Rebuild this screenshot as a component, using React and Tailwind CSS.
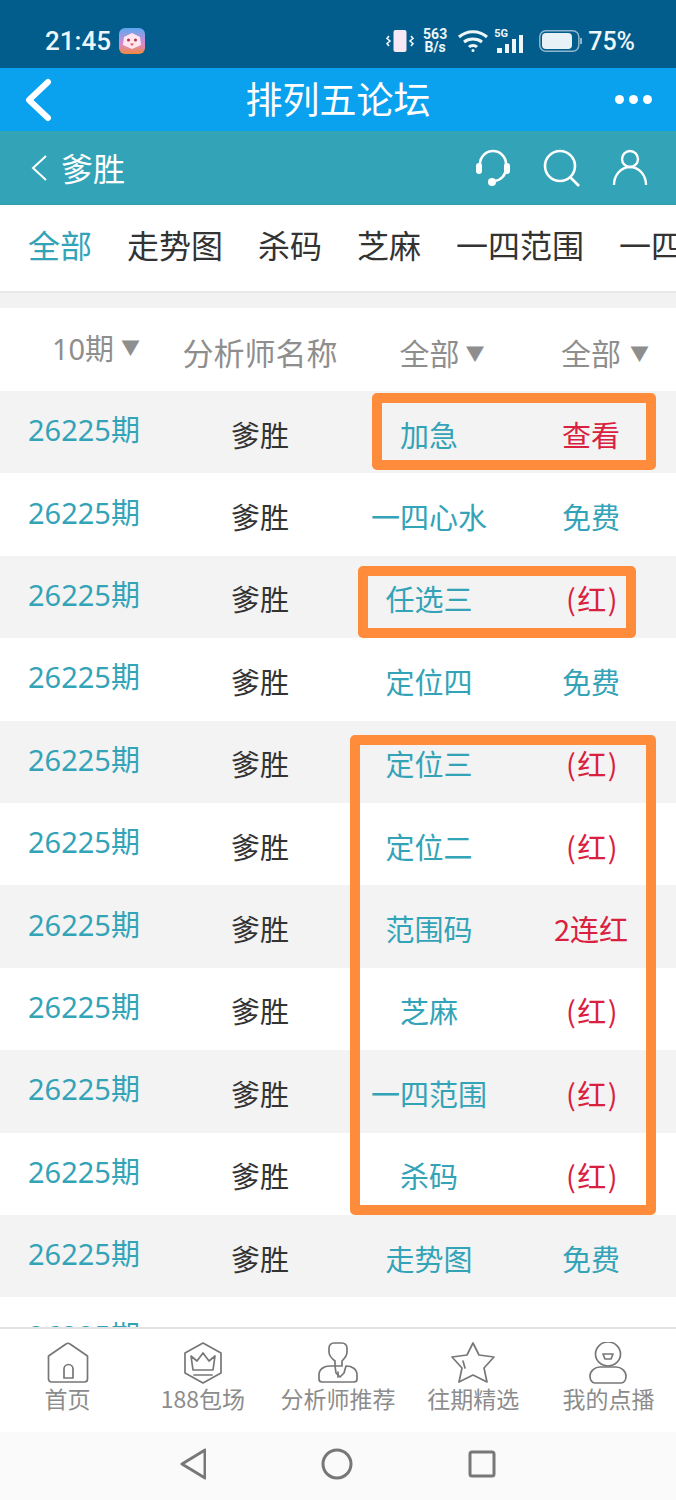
import React from "react";

const FONT = '"Noto Sans CJK SC", "Noto Sans", sans-serif';
const LATIN = '"Noto Sans", "Noto Sans CJK SC", sans-serif';
const ROBOTO = "Roboto, sans-serif";
const rows = [
  ["加急", "查看", 1], ["一四心水", "免费", 0], ["任选三", "(红)", 1], ["定位四", "免费", 0],
  ["定位三", "(红)", 1], ["定位二", "(红)", 1], ["范围码", "2连红", 1], ["芝麻", "(红)", 1],
  ["一四范围", "(红)", 1], ["杀码", "(红)", 1], ["走势图", "免费", 0], ["", "", 0],
];
const COLS = "grid grid-cols-[168px_184px_154px_170px] items-center";

function Box({ cls }) {
  return <div className={"absolute rounded-[5px] border-[10px] border-[#ff8c3a] " + cls} />;
}

function Stroke({ w, children }) {
  return (
    <svg width={w} height="42" viewBox={`0 0 ${w} 42`} fill="none" stroke="#777" strokeWidth="1.7" strokeLinejoin="round" strokeLinecap="round">
      {children}
    </svg>
  );
}

const icons = [
  <Stroke w={42}><path d="M1.5 14 19 2q2-1.500 4 0l17.500 12v23a3 3 0 0 1-3 3H4.500a3 3 0 0 1-3-3Z" /><path d="M17 36v-9a4.500 4.500 0 0 1 9 0v9Z" /></Stroke>,
  <Stroke w={40}><path d="M20 1 38 11v20L20 41 2 31V11Z" /><path d="M8 14l6 5 6-8 6 8 6-5-2 14H10Z" /><path d="M11 33h18" /></Stroke>,
  <Stroke w={40}><path d="M11 6a5 5 0 0 1 5-5h8a5 5 0 0 1 5 5v4c0 4-3 7-5 9v5h-7v-5c-3-2-6-6-6-9Z" /><path d="M12 24C6 24 1 27 1 33v4a3 3 0 0 0 3 3h32a3 3 0 0 0 3-3v-4c0-6-5-9-11-9l-2 7-4 4-4-4-1-7Z" /><path d="M20 30v5" /></Stroke>,
  <Stroke w={44}><path d="M22 1l6 12 15 2-10 11 3 14-14-7-14 7 3-14L1 15l15-2Z" /><path d="M12 19l2 7" /></Stroke>,
  <Stroke w={38}><ellipse cx="19" cy="12" rx="12.500" ry="12" /><path d="M14 12h10l-2 5h-6Z" /><path d="M11 25h16c5 0 10 4 10 9 0 4-2 7-5 7H6c-3 0-5-3-5-7 0-5 5-9 10-9Z" /></Stroke>,
];
const navLabels = ["首页", "188包场", "分析师推荐", "往期精选", "我的点播"];

export default function App() {
  return (
    <div className="relative w-[676px] h-[1500px] flex flex-col bg-white overflow-hidden" style={{ fontFamily: FONT }}>
      {/* status bar */}
      <div className="h-[68px] shrink-0 bg-[#025d8c] flex items-center pl-[45px] pr-[41px] pt-[14px] text-[#eef6fa]">
        <span className="text-[26px] font-medium leading-none" style={{ fontFamily: ROBOTO }}>21:45</span>
        <svg className="ml-[8px]" width="26" height="26" viewBox="0 0 26 26">
          <defs>
            <linearGradient id="app" x1="0" y1="0" x2="0" y2="1">
              <stop offset="0" stopColor="#5aa8f0" /><stop offset="0.6" stopColor="#d98ad0" /><stop offset="1" stopColor="#f08a3c" />
            </linearGradient>
          </defs>
          <rect width="26" height="26" rx="6" fill="url(#app)" />
          <path d="M13 5 21 9 22 17 13 21 4 17 5 9Z" fill="#ffe6ee" />
          <circle cx="9.500" cy="12" r="1.500" fill="#b03050" /><circle cx="16.500" cy="12" r="1.500" fill="#b03050" />
          <path d="M11 15.500h4L13 18Z" fill="#e0584a" />
        </svg>
        <div className="flex-1" />
        <svg width="30" height="24" viewBox="0 0 30 24" fill="none" stroke="#eef6fa" strokeWidth="1.6" className="mr-[8px]">
          <rect x="8.500" y="1" width="13" height="22" rx="2" fill="#f6e8f4" stroke="none" />
          <path d="M4 7l-2 2.500 3 2.500-3 2.500 2 2.500M26 7l2 2.500-3 2.500 3 2.500-2 2.500" />
        </svg>
        <div className="flex flex-col items-center text-[14px] font-bold leading-[13px] mr-[10px]" style={{ fontFamily: ROBOTO }}>
          <span>563</span><span>B/s</span>
        </div>
        <svg width="32" height="24" viewBox="0 0 32 24" fill="none" stroke="#eef6fa" strokeWidth="3" className="mr-[5px]">
          <path d="M2 8c8-7 20-7 28 0M7 13c5-4 13-4 18 0M12 18c2-2 6-2 8 0" />
          <circle cx="16" cy="21.500" r="1.500" fill="#eef6fa" stroke="none" />
        </svg>
        <div className="relative w-[35px] h-[24px] mr-[10px]">
          <span className="absolute left-0 top-[-1px] text-[11px] font-bold leading-none" style={{ fontFamily: ROBOTO }}>5G</span>
          <div className="absolute left-[3px] right-0 bottom-[0px] flex items-end gap-[3px]">
            <i className="block w-[5px] h-[5px] bg-[#eef6fa]" /><i className="block w-[4px] h-[9px] bg-[#eef6fa]" />
            <i className="block w-[4px] h-[14px] bg-[#eef6fa]" /><i className="block w-[4px] h-[18px] bg-[#eef6fa]" />
          </div>
        </div>
        <svg width="44" height="22" viewBox="0 0 44 22" className="mr-[5px]">
          <rect x="0.800" y="0.800" width="39" height="20.400" rx="6" fill="none" stroke="#8fb6cc" strokeWidth="1.500" />
          <rect x="3" y="3" width="30" height="16" rx="4" fill="#e8f2f6" />
          <path d="M42 8v6" stroke="#8fb6cc" strokeWidth="2" />
        </svg>
        <span className="text-[25px] font-medium leading-none" style={{ fontFamily: ROBOTO }}>75%</span>
      </div>

      {/* title bar */}
      <div className="relative h-[63px] shrink-0 bg-[#0aa1ef] flex items-center justify-between pl-[24px] pr-[24px] text-white">
        <svg width="28" height="44" viewBox="0 0 28 44" fill="none" stroke="#fff" strokeWidth="6" strokeLinecap="round" strokeLinejoin="round">
          <path d="M24 4 5 22l19 18" />
        </svg>
        <span className="absolute left-0 right-0 top-[12px] text-center text-[37px] leading-none">排列五论坛</span>
        <div className="flex gap-[5px]">
          <i className="block w-[9px] h-[9px] rounded-full bg-white" />
          <i className="block w-[9px] h-[9px] rounded-full bg-white" />
          <i className="block w-[9px] h-[9px] rounded-full bg-white" />
        </div>
      </div>

      {/* sub bar */}
      <div className="h-[74px] shrink-0 bg-[#33a3b8] flex items-center pl-[31px] pr-[28px] text-white border-b border-[#2f9aa8]">
        <svg width="16" height="26" viewBox="0 0 16 26" fill="none" stroke="#fff" strokeWidth="2">
          <path d="M15 1 2 13l13 12" />
        </svg>
        <span className="ml-[14px] text-[32px] leading-none pb-[2px]">爹胜</span>
        <div className="flex-1" />
        <svg width="36" height="38" viewBox="0 0 36 38" fill="none" stroke="#fff" strokeWidth="2.600" className="mr-[32px]">
          <path d="M5 19V15a13 13 0 0 1 26 0v4c0 7-5 12-11 13" />
          <rect x="1" y="14" width="6" height="11" rx="3" fill="#fff" stroke="none" />
          <rect x="29" y="14" width="6" height="11" rx="3" fill="#fff" stroke="none" />
          <circle cx="17" cy="33" r="4" fill="#fff" stroke="none" />
        </svg>
        <svg width="38" height="40" viewBox="0 0 38 40" fill="none" stroke="#fff" strokeWidth="2.600" className="mr-[31px]">
          <circle cx="17" cy="18" r="15" />
          <path d="M27 29l9 9" />
        </svg>
        <svg width="36" height="38" viewBox="0 0 36 38" fill="none" stroke="#fff" strokeWidth="2.400">
          <circle cx="18" cy="10" r="8" />
          <path d="M2 36c0-10 7-18 16-18s16 8 16 18" />
        </svg>
      </div>

      {/* tabs */}
      <div className="h-[88px] shrink-0 flex items-center whitespace-nowrap overflow-hidden pl-[28px] pb-[8px] gap-[35px] text-[32px] leading-none text-[#333] border-b-2 border-[#e8e8e8] bg-white">
        <span className="text-[#33a3b8]">全部</span>
        <span>走势图</span>
        <span>杀码</span>
        <span>芝麻</span>
        <span>一四范围</span>
        <span>一四心水</span>
      </div>
      <div className="h-[15px] shrink-0 bg-[#f2f2f2]" />

      {/* table header */}
      <div className={COLS + " h-[83px] shrink-0 text-[30px] text-[#8e8e8e] leading-none text-center"}>
        <span className="-mt-[2px] pl-[24px] whitespace-nowrap text-[29px]" style={{ fontFamily: LATIN }}>10期<span className="ml-[7px] text-[19px] align-[5px]">▼</span></span>
        <span className="mt-[4px] text-[31px] whitespace-nowrap">分析师名称</span>
        <span className="mt-[4px] pl-[26px] whitespace-nowrap">全部<span className="ml-[6px] text-[19px] align-[4px]">▼</span></span>
        <span className="mt-[4px] pl-[28px] whitespace-nowrap">全部<span className="ml-[9px] text-[19px] align-[4px]">▼</span></span>
      </div>

      {/* table rows */}
      <div className="flex-1 min-h-0 overflow-hidden">
        {rows.map((r, i) => (
          <div key={i} className={COLS + " h-[82.400px] leading-none text-center " + (i % 2 === 0 ? "bg-[#f3f3f3]" : "bg-white")}>
            <span className="text-[29px] text-[#33a3b8] -mt-[5px]" style={{ fontFamily: LATIN }}>26225期</span>
            <span className="mt-[4px] text-[29px] text-[#333]">{r[0] ? "爹胜" : ""}</span>
            <span className="mt-[4px] text-[29px] text-[#33a3b8]">{r[0]}</span>
            <span className={"mt-[4px] text-[29px] whitespace-nowrap " + (r[2] ? "text-[#d9213f]" : "text-[#33a3b8]") + (r[1] === "(红)" ? " tracking-[1.500px] pl-[3px]" : "")}>{r[1]}</span>
          </div>
        ))}
      </div>

      {/* bottom nav */}
      <div className="h-[105px] shrink-0 bg-white border-t-2 border-[#e2e2e2] grid grid-cols-5 pt-[13px] relative">
        {navLabels.map((l, i) => (
          <div key={l} className="flex flex-col items-center">
            <div className="h-[42px] flex items-center justify-center">{icons[i]}</div>
            <span className="mt-[3px] text-[23px] leading-none text-[#8c8c8c] whitespace-nowrap">{l}</span>
          </div>
        ))}
      </div>

      {/* system nav */}
      <div className="h-[68px] shrink-0 bg-[#fafafa] flex items-center pl-[180px] pb-[4px] gap-[115px]">
        <svg width="26" height="32" viewBox="0 0 26 32" fill="none" stroke="#777" strokeWidth="3" strokeLinejoin="round"><path d="M25 2 2 16l23 14Z" /></svg>
        <svg width="32" height="32" viewBox="0 0 32 32" fill="none" stroke="#777" strokeWidth="3"><circle cx="16" cy="16" r="14" /></svg>
        <svg width="28" height="28" viewBox="0 0 28 28" fill="none" stroke="#777" strokeWidth="3"><rect x="2" y="2" width="24" height="24" rx="2" /></svg>
      </div>

      {/* orange highlight frames */}
      <Box cls="left-[372px] top-[393px] w-[284px] h-[77px]" />
      <Box cls="left-[358px] top-[566px] w-[278px] h-[72px]" />
      <Box cls="left-[350px] top-[735px] w-[306px] h-[480px]" />
    </div>
  );
}
